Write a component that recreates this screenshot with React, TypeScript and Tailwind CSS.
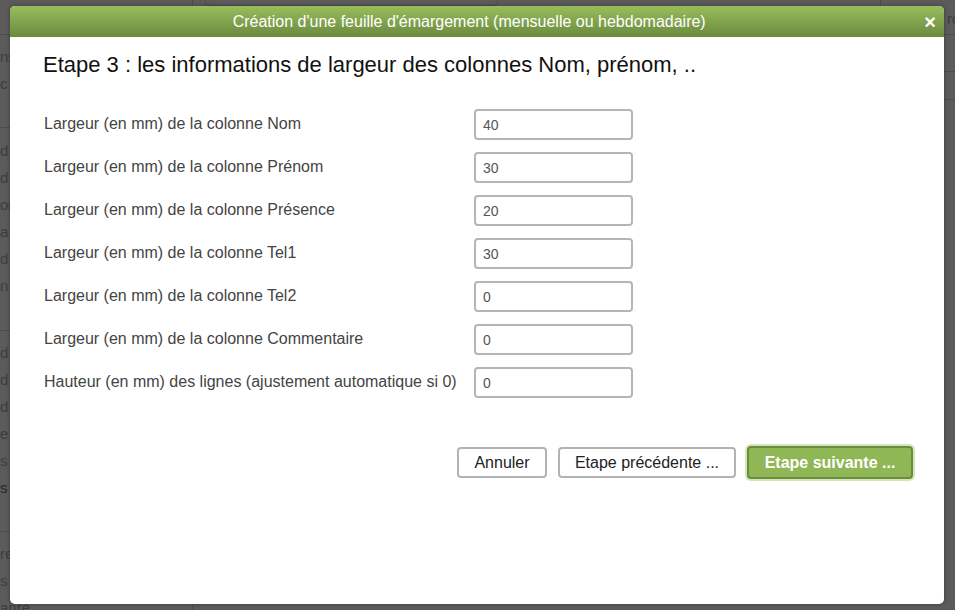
import React from "react";

/* ── Lignes du formulaire ── */
const ROWS = [
  { label: "Largeur (en mm) de la colonne Nom", value: "40" },
  { label: "Largeur (en mm) de la colonne Prénom", value: "30" },
  { label: "Largeur (en mm) de la colonne Présence", value: "20" },
  { label: "Largeur (en mm) de la colonne Tel1", value: "30" },
  { label: "Largeur (en mm) de la colonne Tel2", value: "0" },
  { label: "Largeur (en mm) de la colonne Commentaire", value: "0" },
  { label: "Hauteur (en mm) des lignes (ajustement automatique si 0)", value: "0" },
];

/* ── Page derrière l'overlay (seuls quelques pixels dépassent) ── */
const BG_SECTIONS = [
  { h: "h-[93px]", pt: "pt-[8px]", items: ["ns", "c"] },
  { h: "h-[203px]", pt: "pt-[9px]", items: ["d", "d", "on", "a", "d", "n"] },
  { h: "h-[201px]", pt: "pt-[8px]", items: ["d", "d", "d", "e", "s", "s"] },
  { h: "flex-1", pt: "pt-[8px]", items: ["re", "s", "anre"] },
];

function Background() {
  return (
    <div className="flex w-full h-full bg-[#5b5b5b] text-[15px] text-[#3e3e3e]">
      {/* barre latérale */}
      <div className="flex flex-col w-[193px] h-full border-r border-[#4f4f4f]">
        <div className="h-[35px] flex-shrink-0 border-b border-[#4c4c4c]" />
        {BG_SECTIONS.map((s, i) => (
          <div key={i} className={`${s.h} ${s.pt} flex-shrink-0 flex flex-col border-b border-[#4c4c4c] leading-[27px]`}>
            {s.items.map((t, j) => (
              <span key={j} className={i === 2 && j === 5 ? "text-[#262626]" : ""}>{t}</span>
            ))}
          </div>
        ))}
      </div>

      {/* zone principale */}
      <div className="flex-1 flex flex-col">
        <div className="flex h-[35px] border-b border-[#4c4c4c]">
          <div className="ml-[12px] h-[6px] w-[293px] rounded-b border border-t-0 border-[#4f4f4f]" />
          <div className="flex-1" />
          <div className="w-[75px] flex items-start justify-end pt-[10px] text-[#3e3e3e] leading-[18px] border-l border-[#4f4f4f]">
            <span className="w-[8px] overflow-hidden">rc</span>
          </div>
        </div>
        <div className="h-[37px] border-b border-[#4c4c4c]" />
        <div className="h-[28px] border-b border-[#4c4c4c]" />
      </div>
    </div>
  );
}

export default function App() {
  return (
    <div
      className="relative w-[955px] h-[610px] overflow-hidden"
      style={{ fontFamily: '"Liberation Sans", Arial, sans-serif' }}
    >
      <Background />

      {/* ── Fenêtre modale (par-dessus la page) ── */}
      <div className="absolute left-[10px] top-[6px] w-[934px] h-[598px] flex flex-col rounded-[5px] bg-white overflow-hidden shadow-[0_0_4px_rgba(0,0,0,0.35)]">
        {/* Titre */}
        <div className="flex items-center h-[31px] flex-shrink-0 bg-gradient-to-b from-[#98bd5c] to-[#6b8a3f]">
          <p className="flex-1 text-center text-[16px] text-white leading-none pl-[4px]">
            Création d'une feuille d'émargement (mensuelle ou hebdomadaire)
          </p>
          <span className="mr-[8px] text-[20px] font-bold text-white leading-none">×</span>
        </div>

        {/* Contenu */}
        <div className="flex flex-col pl-[33px] pr-[31px]">
          <h1 className="mt-[15px] text-[22px] leading-[26px] text-[#111]">
            Etape 3 : les informations de largeur des colonnes Nom, prénom, ..
          </h1>

          <div className="mt-[31px] flex flex-col gap-[12px] pl-[1px]">
            {ROWS.map((r) => (
              <div key={r.label} className="grid grid-cols-[430px_159px] items-center">
                <span className="text-[16px] text-[#444] leading-[18px] -mt-[2px]">{r.label}</span>
                <input
                  defaultValue={r.value}
                  className="h-[31px] w-[159px] rounded-[4px] border-2 border-[#b5b5b5] pl-[7px] pr-[8px] text-[14px] text-[#555] outline-none"
                />
              </div>
            ))}
          </div>

          <div className="mt-[48px] flex justify-end items-center gap-[11px]">
            <button className="h-[31px] w-[90px] rounded-[4px] border-2 border-[#b3b3b3] bg-white text-[16px] text-[#222]">
              Annuler
            </button>
            <button className="h-[31px] w-[178px] rounded-[4px] border-2 border-[#b3b3b3] bg-white text-[16px] text-[#222]">
              Etape précédente ...
            </button>
            <button className="h-[33px] w-[166px] rounded-[4px] border-2 border-[#6c8b40] bg-[#8fb755] text-[16px] font-bold text-white shadow-[0_0_0_2px_#d2e7b6]">
              Etape suivante ...
            </button>
          </div>
        </div>
      </div>
    </div>
  );
}
